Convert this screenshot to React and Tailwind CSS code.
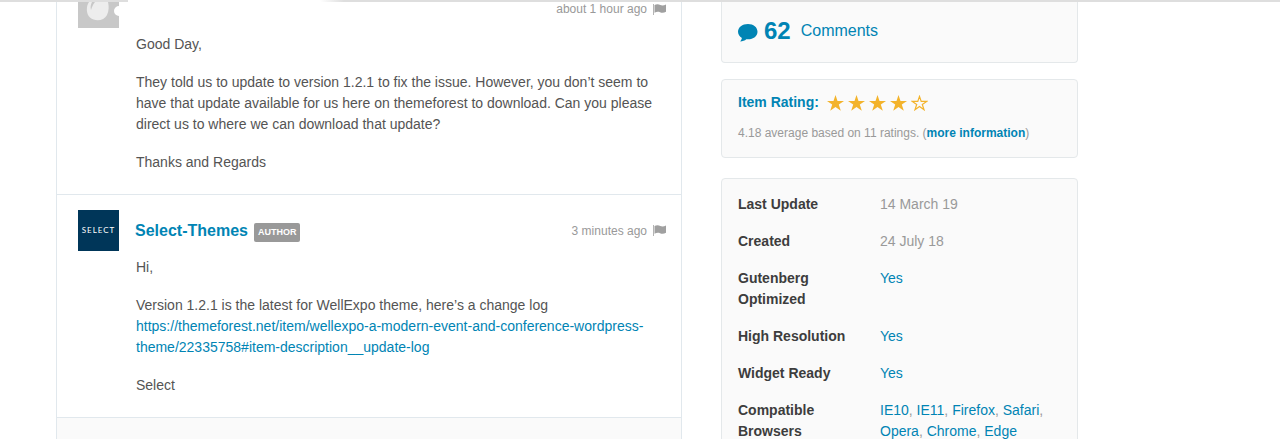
const link = "text-[#0084b4] hover:underline";

const attributes = [
  { label: "Last Update", value: "14 March 19" },
  { label: "Created", value: "24 July 18" },
  { label: "Gutenberg Optimized", links: ["Yes"] },
  { label: "High Resolution", links: ["Yes"] },
  { label: "Widget Ready", links: ["Yes"] },
  {
    label: "Compatible Browsers",
    links: ["IE10", "IE11", "Firefox", "Safari", "Opera", "Chrome", "Edge"],
  },
];

function FlagIcon() {
  return (
    <svg viewBox="0 0 13 11" className="h-[11px] w-[13px]" aria-hidden="true">
      <path d="M0 0h1v11H0z" fill="#b4b4b4" />
      <path
        d="M1.500 1C3.500 0 5.500 0 7.300 1 9 1.800 11 1.500 13 .6v7.200c-2 1.200-4 1.300-6 .5C5.500 7.500 3.500 7.700 1.500 8.700z"
        fill="#a0a0a0"
      />
    </svg>
  );
}

function CommentIcon() {
  return (
    <svg
      viewBox="0 0 20 18"
      className="mt-1 h-[18px] w-5"
      fill="currentColor"
      aria-hidden="true"
    >
      <path d="M10 0C4.300 0 0 3.400 0 7.700c0 2.600 1.500 4.800 3.900 6.200-.2 1.300-.8 2.400-1.700 3.500 2.500 0 4.600-.9 6.100-2.200.6.100 1.100.1 1.700.1 5.500 0 9.500-3.300 9.500-7.600S15.500 0 10 0z" />
    </svg>
  );
}

function Star({ filled }) {
  return (
    <svg
      viewBox="0 0 17 16"
      className="h-4 w-[17px]"
      fill={filled ? "currentColor" : "none"}
      stroke="currentColor"
      strokeWidth={filled ? 0 : 1.2}
      aria-hidden="true"
    >
      {filled ? (
        <path d="M8.500 0l2 5.900H17l-5.200 3.700 2 6.100-5.300-3.700-5.300 3.700 2-6.100L0 5.900h6.500z" />
      ) : (
        <path d="M8.500 1.400l1.700 5h5.500l-4.400 3.100 1.700 5.200-4.500-3.200L4 14.700l1.700-5.200-4.400-3.100h5.500z" />
      )}
    </svg>
  );
}

function Posted({ time }) {
  return (
    <div className="flex items-center gap-1.5 text-[12px] leading-5 text-[#999]">
      <span>{time}</span>
      <button type="button" aria-label="Flag comment">
        <FlagIcon />
      </button>
    </div>
  );
}

function Card({ className = "", children }) {
  return (
    <section
      className={`rounded-sm border border-[#e4e8ea] bg-[#fafafa] px-4 ${className}`}
    >
      {children}
    </section>
  );
}

function Comments() {
  return (
    <main className="w-[626px] shrink-0 border-x border-[#e1e8ed] text-[14px] leading-[21px] text-[#545454]">
      <article className="flex border-b border-[#e1e8ed] px-[21px] pb-[21px]">
        <svg viewBox="0 0 41 26" className="h-[26px] w-[41px] shrink-0">
          <path d="M0 0h41v4a5 5 0 0 0 0 10v12H0z" fill="#c8c8c8" />
          <path
            d="M11 0C8 4 8 12 12 15.500c5 4.500 14 3.500 17-2.500 2-4 2-9 1-13H17c-2 2-3 5-4 8-1-3 0-6 1-8z"
            fill="#ededed"
          />
        </svg>
        <div className="ml-[17px] flex-1">
          <div className="-mr-1.5 flex h-8 justify-end">
            <div className="-mt-[3px]">
              <Posted time="about 1 hour ago" />
            </div>
          </div>
          <div className="space-y-[17px]">
            <p>Good Day,</p>
            <p>
              They told us to update to version 1.2.1 to fix the issue. However,
              you don’t seem to have that update available for us here on
              themeforest to download. Can you please direct us to where we can
              download that update?
            </p>
            <p>Thanks and Regards</p>
          </div>
        </div>
      </article>

      <article className="flex border-b border-[#e1e8ed] px-[21px] pt-[15px] pb-[21px]">
        <div className="flex size-[41px] shrink-0 items-center justify-center bg-[#003659] font-['Lato',sans-serif] text-[8px] tracking-[1px] text-white">
          SELECT
        </div>
        <div className="ml-4 flex-1">
          <div className="-mr-1.5 flex h-[47px] items-start justify-between">
            <div className="flex h-[41px] items-center gap-1.5">
              <a href="#" className={`text-[16px] font-bold ${link}`}>
                Select-Themes
              </a>
              <span className="mt-1 rounded-xs bg-[#999] px-1 text-[9px] leading-[19px] font-bold text-white">
                AUTHOR
              </span>
            </div>
            <div className="flex h-[41px] items-center">
              <Posted time="3 minutes ago" />
            </div>
          </div>
          <div className="ml-px space-y-[17px]">
            <p>Hi,</p>
            <p>
              Version 1.2.1 is the latest for WellExpo theme, here’s a change
              log
              <br />
              <a href="#" className={link}>
                https://themeforest.net/item/wellexpo-a-modern-event-and-conference-wordpress-theme/22335758#item-description__update-log
              </a>
            </p>
            <p>Select</p>
          </div>
        </div>
      </article>
      <div className="h-[21px] bg-[#fafafa]" />
    </main>
  );
}

function Sidebar() {
  return (
    <aside className="w-[357px] shrink-0 space-y-4">
      <Card className="rounded-t-none border-t-0 pt-[13px] pb-4">
        <a
          href="#"
          className="flex h-[31px] items-center text-[#0084b4] hover:underline"
        >
          <CommentIcon />
          <strong className="ml-1.5 text-2xl">62</strong>
          <span className="ml-2.5 text-[16px]">Comments</span>
        </a>
      </Card>

      <Card className="pt-3 pb-[13px]">
        <div className="flex items-center">
          <strong className="text-[14px] leading-[21px] text-[#0084b4]">
            Item Rating:
          </strong>
          <div
            className="ml-2 flex gap-1 text-[#f3b32b]"
            role="img"
            aria-label="4.18 stars"
          >
            {[1, 2, 3, 4, 5].map((n) => (
              <Star key={n} filled={n <= 4} />
            ))}
          </div>
        </div>
        <p className="mt-2.5 text-[12px] leading-[21px] text-[#999]">
          4.18 average based on 11 ratings. (
          <a href="#" className={`font-bold ${link}`}>
            more information
          </a>
          )
        </p>
      </Card>

      <Card className="mt-5 pt-[15px]">
        <table className="w-full text-left text-[14px] leading-[21px]">
          <tbody>
            {attributes.map(({ label, value, links }) => (
              <tr key={label} className="align-top">
                <th className="w-[142px] pr-6 pb-4 font-bold text-[#3d3d3d]">
                  {label}
                </th>
                <td className="pb-4 text-[#999]">
                  {value}
                  {links?.map((name, i) => (
                    <span key={name}>
                      {i > 0 && ", "}
                      <a href="#" className={link}>
                        {name}
                      </a>
                    </span>
                  ))}
                </td>
              </tr>
            ))}
          </tbody>
        </table>
      </Card>
    </aside>
  );
}

export default function App() {
  return (
    <div className="h-screen overflow-hidden bg-white font-['Liberation_Sans',Arial,sans-serif]">
      <div className="flex h-0.5">
        <div className="w-32 bg-[#dedede]" />
        <div className="ml-48 w-6 bg-linear-to-r from-white to-[#dedede]" />
        <div className="flex-1 bg-[#dedede]" />
      </div>
      <div className="ml-14 flex items-start gap-[39px]">
        <Comments />
        <Sidebar />
      </div>
    </div>
  );
}
